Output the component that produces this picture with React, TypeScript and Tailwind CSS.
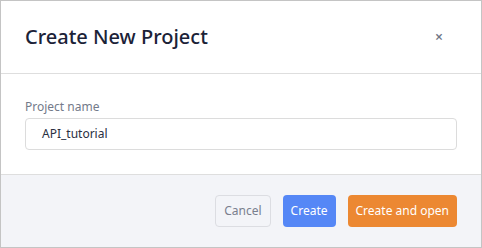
import React from "react";

export default function App() {
  return (
    <div
      className="w-[482px] h-[248px] border border-[#c4c4c4] bg-white flex flex-col"
      style={{ fontFamily: '"Noto Sans", "Open Sans", sans-serif' }}
    >
      <div className="h-[73px] shrink-0 flex items-center justify-between pl-6 pr-[38px] border-b border-[#dedede]">
        <h1 className="text-[20px] font-medium text-[#1b2237] leading-none">Create New Project</h1>
        <button className="text-[#6f7586] text-[14px] font-semibold leading-none">×</button>
      </div>
      <div className="h-[100px] shrink-0 px-6 pt-[27px]">
        <label className="block text-[12px] text-[#737a8a] leading-none mb-[5px]">Project name</label>
        <div className="h-[32px] rounded-[4px] border border-[#dcdcdc] flex items-center px-4 text-[12px] text-[#2a3042]">
          API_tutorial
        </div>
      </div>
      <div className="flex-1 bg-[#f3f4f8] border-t border-[#dedede] flex items-center justify-end gap-3 pr-6">
        <button className="h-[32px] px-2 rounded-[4px] border border-[#dcdde2] text-[12px] text-[#7a7f8e]">Cancel</button>
        <button className="h-[32px] px-2 rounded-[4px] bg-[#5587f6] text-[12px] text-white">Create</button>
        <button className="h-[32px] px-2 rounded-[4px] bg-[#ec8832] text-[12px] text-white">Create and open</button>
      </div>
    </div>
  );
}
